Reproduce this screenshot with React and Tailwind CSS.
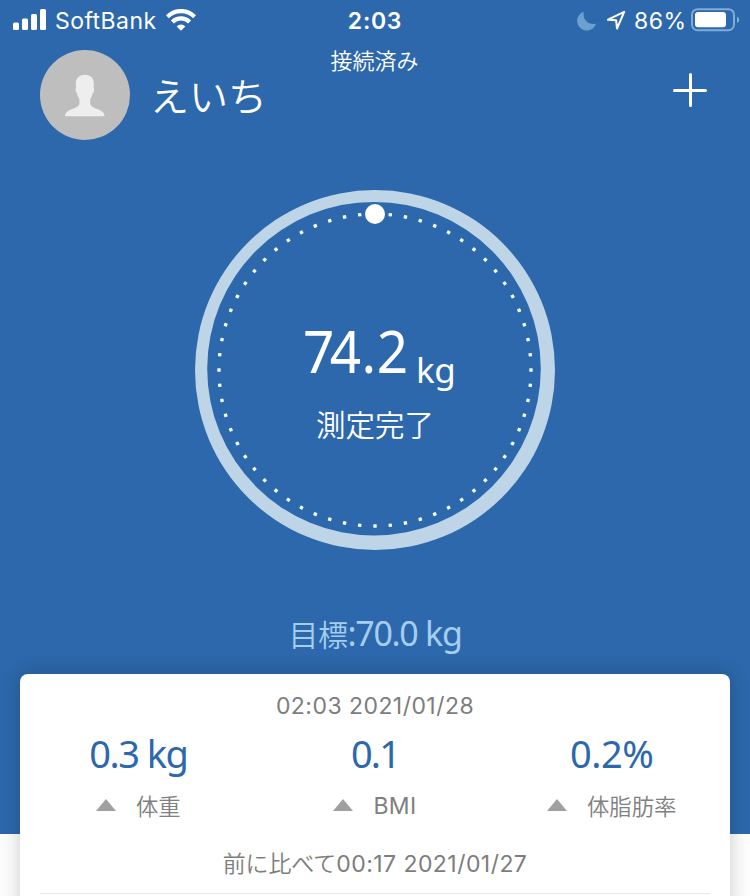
const JP = "font-['Noto_Sans_CJK_JP',sans-serif]";
const UI = "font-['Inter','Noto_Sans_CJK_JP',sans-serif]";
const NUM = "font-['Noto_Sans','Noto_Sans_CJK_JP',sans-serif]";

function StatusBar() {
  return (
    <div className={`${UI} flex h-10 items-center justify-between whitespace-nowrap text-[23px] leading-10 text-white`}>
      <div className="flex w-[250px] items-center pl-[13px]">
        <svg width="33" height="22" viewBox="0 0 33 22" fill="#fff" className="mr-[9px]">
          <rect x="0" y="13.5" width="6" height="7.5" rx="1.5" />
          <rect x="9" y="9.5" width="6" height="11.5" rx="1.5" />
          <rect x="18" y="5" width="6" height="16" rx="1.5" />
          <rect x="27" y="0" width="6" height="21" rx="1.5" />
        </svg>
        <span className="w-[102px] pt-px tracking-[0.45px]">SoftBank</span>
        <svg width="30" height="23" viewBox="0 0 30 23" className="ml-[9px]" fill="none" stroke="#fff" strokeWidth="4.2">
          <path d="M1.4 7.7a19.2 19.2 0 0 1 27.2 0" />
          <path d="M6.4 13a12.2 12.2 0 0 1 17.2 0" />
          <path d="M15 21.7l-4.3-4.3a6 6 0 0 1 8.6 0z" fill="#fff" stroke="none" />
        </svg>
      </div>
      <span className="pt-px text-[23px] font-semibold tracking-[0.7px]">2:03</span>
      <div className="flex w-[250px] items-center justify-end pr-[10px]">
        <svg width="20" height="20" viewBox="0 0 20 20" fill="#6ba0cf" className="mr-[9px] mt-[2px]">
          <path d="M6.8 .8A9.600 9.600 0 1 0 19 12.500C12.500 14.800 5 9 6.800 .8z" />
        </svg>
        <svg width="20" height="20" viewBox="0 0 20 20" fill="none" stroke="#fff" strokeWidth="2" strokeLinejoin="round" className="mr-[8px]">
          <path d="M18.2 1.8L2 9.7l8.1.5.9 8.3z" />
        </svg>
        <span className="w-[52px] pt-px text-[23px] tracking-[0.5px]">86%</span>
        <svg width="49" height="24" viewBox="0 0 49 24" className="ml-[5px]">
          <rect x="1" y="1.2" width="42" height="21" rx="5.5" fill="none" stroke="#7eacd6" strokeWidth="2" />
          <rect x="4" y="4" width="31" height="15.3" rx="3" fill="#fff" />
          <path d="M46 8.5q2.3 1 2.3 3.3t-2.3 3.3z" fill="#7eacd6" />
        </svg>
      </div>
    </div>
  );
}

function Profile() {
  return (
    <div className="flex h-[100px] items-start justify-between pl-10 pr-[43px] text-white">
      <div className="flex w-[260px] items-center pt-[10px]">
        <svg width="90" height="90" viewBox="0 0 90 90">
          <circle cx="45" cy="45" r="45" fill="#bebebe" />
          <path
            d="M45 24.7c-6 0-9.4 3.7-9.2 9.4l.3 4c-1 .4-.5 4.8 1 5.4.5 2.6 1.2 4 2.3 5.5v4.4c-.5 3-4 4.3-7.4 5.7-4.5 1.8-6.7 3.7-7 7.2h39.6c-.3-3.5-2.5-5.4-7-7.2-3.4-1.4-7-2.7-7.4-5.7v-4.4c1.2-1.5 1.9-2.9 2.4-5.5 1.5-.6 2-5 1-5.4l.2-4c.2-5.7-3-9.4-8.8-9.4z"
            fill="#eee"
          />
        </svg>
        <span className={`${JP} -mt-[3px] ml-[20px] whitespace-nowrap text-[39px] font-[350] leading-[90px]`}>えいち</span>
      </div>
      <span className={`${JP} w-[90px] whitespace-nowrap pl-[2px] pt-[3px] text-[22px] font-[350] leading-[32px]`}>接続済み</span>
      <div className="flex w-[260px] justify-end pt-[33px]">
        <svg width="34" height="34" viewBox="0 0 34 34" stroke="#fff" strokeWidth="3" strokeLinecap="round">
          <path d="M17.5 1.500v31M1.500 17.500h31" />
        </svg>
      </div>
    </div>
  );
}

function Gauge() {
  const dots = Array.from({ length: 64 }, (_, i) => (i * 360) / 64);
  return (
    <div className="mx-auto mt-[50px] grid h-[360px] w-[360px]">
      <svg width="360" height="360" viewBox="0 0 360 360" className="col-start-1 row-start-1">
        <circle cx="180" cy="180" r="180" fill="#bed5e7" />
        <circle cx="179" cy="178.7" r="166.8" fill="#2c68ab" />
        {dots.map((a) => (
          <rect key={a} x="178.3" y="22.3" width="3.4" height="3.4" rx="0.5" fill="#f2fbff" transform={`rotate(${a} 180 180)`} />
        ))}
        <circle cx="180" cy="24" r="10" fill="#fff" />
      </svg>
      <div className="col-start-1 row-start-1 flex flex-col items-center pt-[120px] text-white">
        <div className={`${NUM} flex h-[80px] w-[144px] items-baseline whitespace-nowrap`}>
          <span className="w-[117px] origin-left scale-x-[0.93] text-[59px] leading-[80px]">
            <span className="tracking-[-5px]">7</span>
            <span className="tracking-[0.5px]">4.</span>2
          </span>
          <span className="text-[35px] leading-[44px] tracking-[-0.5px] [transform:translateY(10px)]">kg</span>
        </div>
        <span className={`${JP} mt-[11px] whitespace-nowrap text-[29.5px] font-[350] leading-[44px]`}>測定完了</span>
      </div>
    </div>
  );
}

function Metric({ value, label, tracking }) {
  return (
    <div className="flex flex-1 flex-col items-center whitespace-nowrap">
      <span className={`${NUM} h-[56px] text-[38px] leading-[54px] text-[#2c68ab] ${tracking}`}>{value}</span>
      <div className="flex h-[46px] items-center text-[#808080]">
        <svg width="20" height="12" viewBox="0 0 20 12" className="mr-[20px]">
          <path d="M10 0l10 12H0z" fill="#a0a0a0" />
        </svg>
        {label}
      </div>
    </div>
  );
}

export default function App() {
  return (
    <div className="h-[896px] w-[750px] overflow-hidden bg-[#fdfdfd]">
      <div className="h-[834px] bg-[#2c68ab]">
        <StatusBar />
        <Profile />
        <Gauge />
        <div className={`${NUM} mt-[58px] whitespace-nowrap text-center text-[34px] leading-[50px] tracking-[-1.3px] text-[#a5cdf0]`}>
          <span className="text-[30px] font-[350] tracking-[-0.5px]">目標</span>:70.0 kg
        </div>
      </div>
      <div className="relative mx-5 -mt-40 h-[240px] rounded-t-[8px] bg-white shadow-[0_0_20px_rgba(0,0,0,0.2)]">
        <div className={`${UI} pt-[12px] text-center text-[23px] leading-[40px] tracking-[0.45px] text-[#7d7d7d]`}>02:03 2021/01/28</div>
        <div className="flex h-[102px]">
          <Metric
            value="0.3 kg"
            tracking="tracking-[-1.5px]"
            label={<span className={`${JP} text-[22.4px] font-[350] leading-[46px]`}>体重</span>}
          />
          <Metric
            value="0.1"
            tracking="tracking-[-1.8px]"
            label={<span className={`${UI} pt-px text-[23px] leading-[46px] tracking-[0.4px]`}>BMI</span>}
          />
          <Metric
            value="0.2%"
            tracking="tracking-[-0.5px]"
            label={<span className={`${JP} text-[22.4px] font-[350] leading-[46px]`}>体脂肪率</span>}
          />
        </div>
        <div className={`${UI} mt-[16px] whitespace-nowrap text-center text-[23px] leading-[40px] tracking-[0.45px] text-[#7d7d7d]`}>
          <span className="font-[350] tracking-[-0.1px]">前に比べて</span>00:17 2021/01/27
        </div>
        <div className="mx-5 mt-[9px] h-px bg-[#e8e8e8]" />
      </div>
    </div>
  );
}
